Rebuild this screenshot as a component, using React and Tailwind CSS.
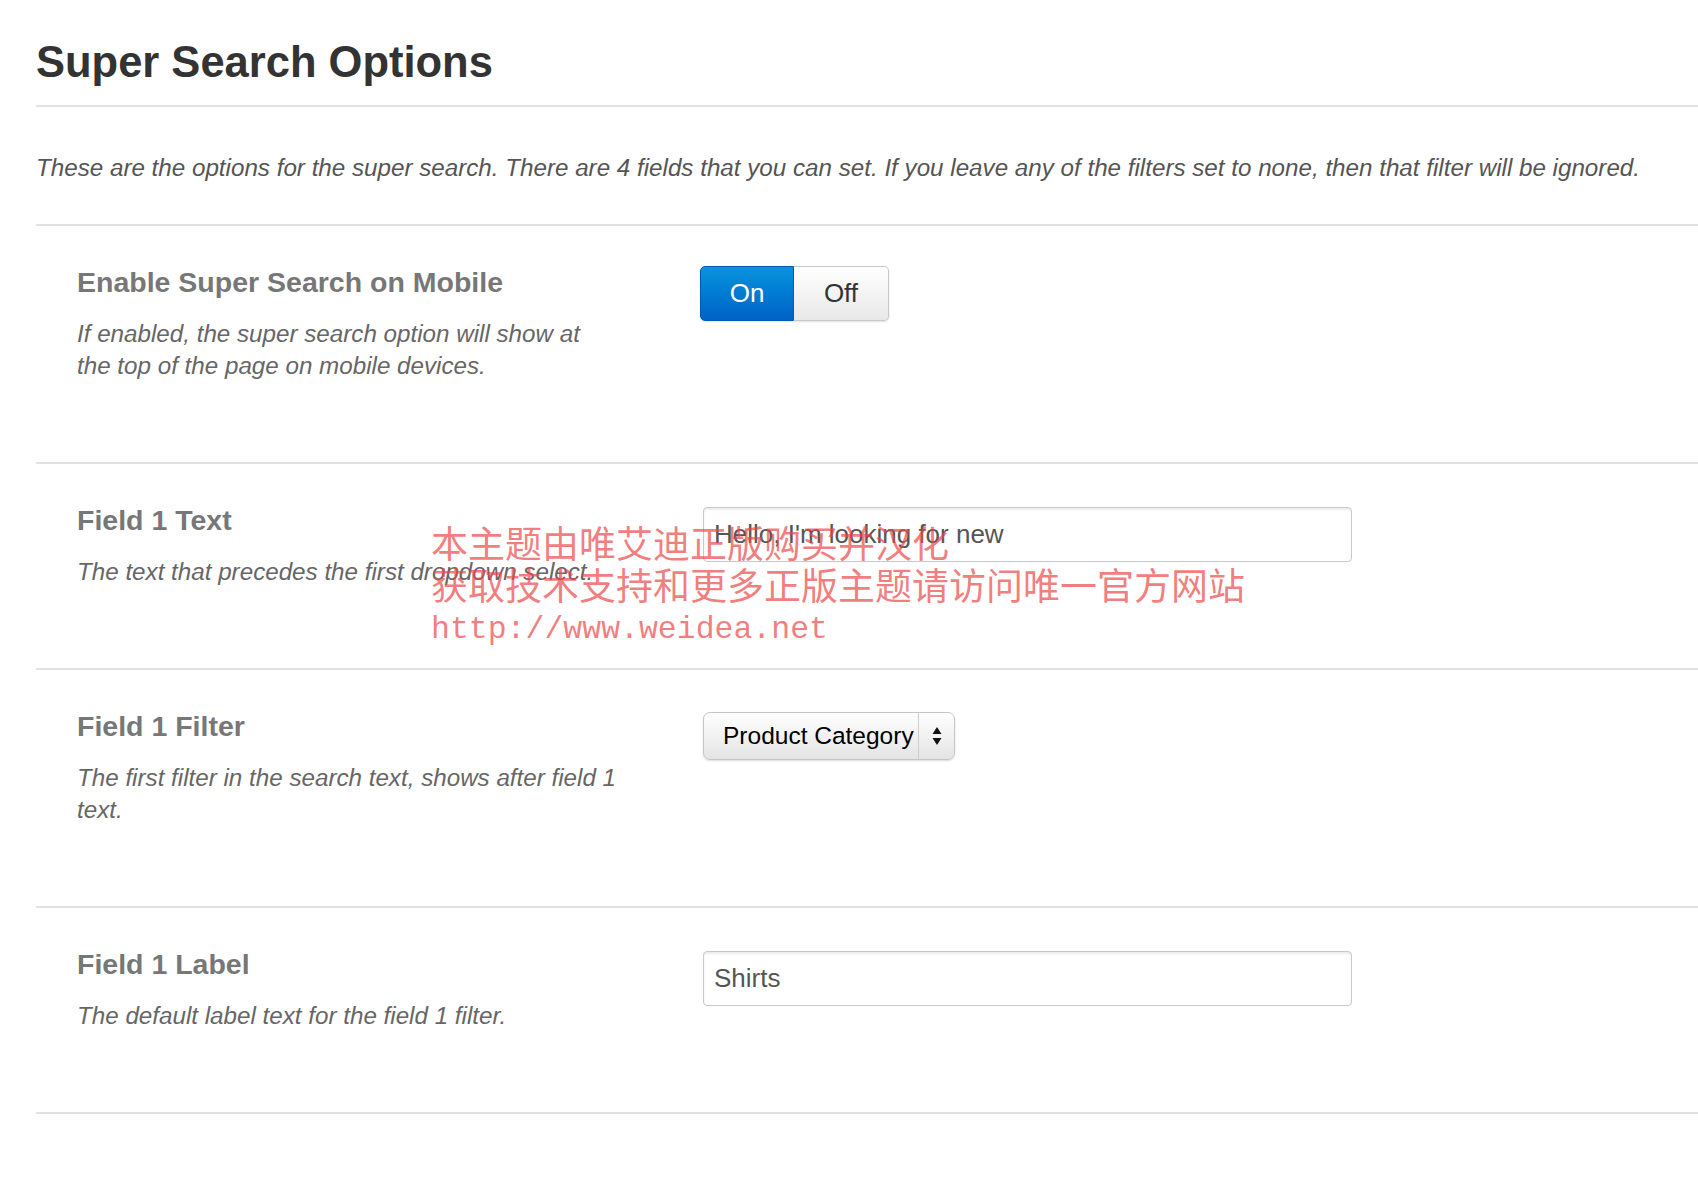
import { useState } from "react";

const rows = [
  {
    title: "Enable Super Search on Mobile",
    desc: "If enabled, the super search option will show at the top of the page on mobile devices.",
    kind: "toggle",
  },
  {
    title: "Field 1 Text",
    desc: "The text that precedes the first dropdown select.",
    kind: "text",
    value: "Hello, I'm looking for new",
  },
  {
    title: "Field 1 Filter",
    desc: "The first filter in the search text, shows after field 1 text.",
    kind: "select",
    value: "Product Category",
  },
  {
    title: "Field 1 Label",
    desc: "The default label text for the field 1 filter.",
    kind: "text",
    value: "Shirts",
  },
];

function Toggle() {
  const [on, setOn] = useState(true);
  return (
    <div className="flex h-[55px] shadow-[0_1px_2px_rgba(0,0,0,0.12)] rounded-[5px]">
      <button
        onClick={() => setOn(true)}
        className={
          on
            ? "w-[94px] rounded-l-[5px] border border-[#0059b3] bg-gradient-to-b from-[#0b93dd] to-[#0062c6] text-white text-[26px]"
            : "w-[94px] rounded-l-[5px] border border-[#c8c8c8] bg-gradient-to-b from-white to-[#e8e8e8] text-[#333] text-[26px]"
        }
      >
        On
      </button>
      <button
        onClick={() => setOn(false)}
        className={
          !on
            ? "w-[95px] rounded-r-[5px] border border-l-0 border-[#0059b3] bg-gradient-to-b from-[#0b93dd] to-[#0062c6] text-white text-[26px]"
            : "w-[95px] rounded-r-[5px] border border-l-0 border-[#c8c8c8] bg-gradient-to-b from-white to-[#e8e8e8] text-[#333] text-[26px]"
        }
      >
        Off
      </button>
    </div>
  );
}

function TextField({ value }) {
  return (
    <input
      type="text"
      defaultValue={value}
      className="mt-[3px] ml-[3px] w-[649px] h-[55px] rounded-[4px] border border-[#c9c9c9] px-[10px] text-[26px] text-[#555] shadow-[inset_0_2px_2px_rgba(0,0,0,0.08)] outline-none"
    />
  );
}

function SelectBox({ value }) {
  return (
    <div className="mt-[2px] ml-[3px] flex w-[252px] h-[48px] rounded-[7px] border border-[#c6c6c6] bg-gradient-to-b from-white to-[#e4e4e4] shadow-[0_1px_2px_rgba(0,0,0,0.15)]">
      <div className="w-[215px] flex items-center pl-[19px] border-r border-[#cdcdcd] text-[24.5px] text-black">
        {value}
      </div>
      <div className="flex-1 flex items-center justify-center">
        <svg width="10" height="20" viewBox="0 0 10 20">
          <path d="M5 1 L9.5 8 L0.5 8 Z" fill="#111" />
          <path d="M5 19 L9.5 12 L0.5 12 Z" fill="#111" />
        </svg>
      </div>
    </div>
  );
}

export default function App() {
  return (
    <div className="relative min-h-[1180px] bg-white pl-9 font-['Liberation_Sans',Arial,sans-serif]">
      <h1 className="pt-[37px] text-[43.5px] leading-[50px] font-bold text-[#333]">Super Search Options</h1>
      <div className="mt-[18px] border-t-2 border-[#e2e2e2] pt-[45px] pb-10">
        <p className="text-[24.2px] leading-8 italic text-[#555]">
          These are the options for the super search. There are 4 fields that you can set. If you leave any of the filters set to none, then that filter will be ignored.
        </p>
      </div>

      {rows.map((row) => (
        <div key={row.title} className="flex border-t-2 border-[#e2e2e2] pl-[41px] pt-10 pb-20">
          <div className="w-[623px] shrink-0">
            <h3 className="text-[28.5px] leading-8 font-bold text-[#777]">{row.title}</h3>
            <p className="mt-5 w-[542px] text-[24.2px] leading-8 italic text-[#666]">{row.desc}</p>
          </div>
          <div>
            {row.kind === "toggle" && <Toggle />}
            {row.kind === "text" && <TextField value={row.value} />}
            {row.kind === "select" && <SelectBox value={row.value} />}
          </div>
        </div>
      ))}
      <div className="border-t-2 border-[#e2e2e2]" />

      {/* watermark */}
      <div className="pointer-events-none absolute left-[431px] top-[521px] text-[37px] leading-[42px] text-[rgba(236,70,70,0.7)] font-['Noto_Sans_CJK_SC',sans-serif]">
        <div>本主题由唯艾迪正版购买并汉化</div>
        <div>获取技术支持和更多正版主题请访问唯一官方网站</div>
        <div className="font-['Liberation_Mono',monospace] text-[31.5px] leading-[50px]">http://www.weidea.net</div>
      </div>
    </div>
  );
}
